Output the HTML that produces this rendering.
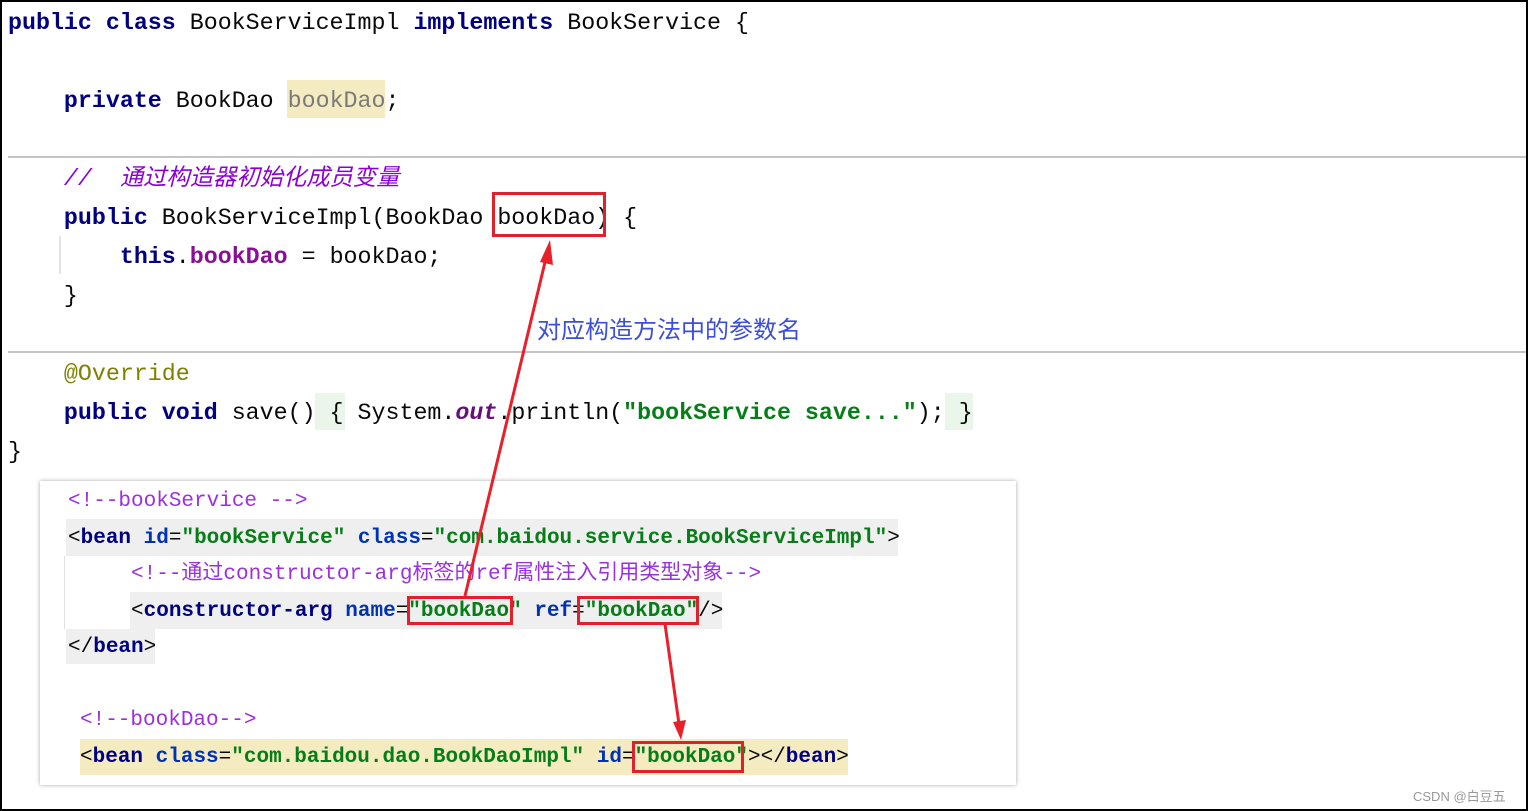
<!DOCTYPE html>
<html><head><meta charset="utf-8"><style>
html,body{margin:0;padding:0}
body{width:1528px;height:811px;position:relative;overflow:hidden;background:#fff;font-family:"Liberation Mono","Noto Sans CJK SC",monospace}
.frame{position:absolute;left:0;top:0;width:1524px;height:807px;border:2px solid #000}
.l{position:absolute;white-space:pre;font-size:23.3px;line-height:30px;color:#080808}
.x{position:absolute;white-space:pre;font-size:21px;line-height:30px;color:#080808}
.k{color:#0033b3;font-weight:bold}
.kw{color:#000080;font-weight:bold}
.s{color:#067d17;font-weight:bold}
.f{color:#871094;font-weight:bold}
.c{color:#8c00d4;font-style:italic}
.xc{color:#9b30e0}
.xt{color:#000080;font-weight:bold}
.xa{color:#0033b3;font-weight:bold}
.rect{position:absolute;border:3px solid #e0202a;box-sizing:border-box}
.hr{position:absolute;left:8px;right:2px;height:2px;background:#c4c4c4}
.bg{position:absolute}
</style></head><body>
<div class="frame"></div>
<div class="hr" style="top:156px"></div>
<div class="hr" style="top:351px"></div>
<div class="bg" style="left:287px;top:80px;width:98px;height:38px;background:#f5ebc0"></div>
<div class="bg" style="left:315px;top:393px;width:30px;height:37px;background:#eaf6ea"></div>
<div class="bg" style="left:945px;top:393px;width:28px;height:37px;background:#eaf6ea"></div>
<div class="bg" style="left:59px;top:236px;width:2px;height:38px;background:#e4e4e4"></div>

<div class="l" style="left:8px;top:8px"><span class="kw">public class</span> BookServiceImpl <span class="kw">implements</span> BookService {</div>
<div class="l" style="left:8px;top:86px">    <span class="kw">private</span> BookDao <span style="color:#7a7a7a">bookDao</span>;</div>
<div class="l" style="left:8px;top:164px">    <span class="c">//  通过构造器初始化成员变量</span></div>
<div class="l" style="left:8px;top:203px">    <span class="kw">public</span> BookServiceImpl(BookDao bookDao) {</div>
<div class="l" style="left:8px;top:242px">        <span class="kw">this</span>.<span class="f">bookDao</span> = bookDao;</div>
<div class="l" style="left:8px;top:281px">    }</div>
<div style="position:absolute;left:537px;top:315px;font-family:'Liberation Sans','Noto Sans CJK SC',sans-serif;font-size:24px;line-height:32px;color:#3d4fd6">对应构造方法中的参数名</div>
<div class="l" style="left:8px;top:359px">    <span style="color:#808000">@Override</span></div>
<div class="l" style="left:8px;top:398px">    <span class="kw">public void</span> save() { System.<span style="color:#660e7a;font-weight:bold;font-style:italic">out</span>.println(<span class="s">"bookService save..."</span>); }</div>
<div class="l" style="left:8px;top:437px">}</div>

<div class="bg" style="left:40px;top:481px;width:976px;height:304px;background:#fff;box-shadow:0 0 4px rgba(0,0,0,.35)"></div>
<div class="bg" style="left:66px;top:519px;width:832px;height:37px;background:#efefef"></div>
<div class="bg" style="left:130px;top:592px;width:592px;height:37px;background:#efefef"></div>
<div class="bg" style="left:66px;top:629px;width:89px;height:35px;background:#efefef"></div>
<div class="bg" style="left:64px;top:556px;width:1px;height:73px;background:#e0e0e0"></div>
<div class="bg" style="left:80px;top:739px;width:768px;height:36px;background:#f5ebc0"></div>

<div class="x" style="left:68px;top:487px"><span class="xc">&lt;!--bookService --&gt;</span></div>
<div class="x" style="left:68px;top:524px">&lt;<span class="xt">bean</span> <span class="xa">id</span>=<span class="s">"bookService"</span> <span class="xa">class</span>=<span class="s">"com.baidou.service.BookServiceImpl"</span>&gt;</div>
<div class="x" style="left:68px;top:560px">     <span class="xc">&lt;!--通过constructor-arg标签的ref属性注入引用类型对象--&gt;</span></div>
<div class="x" style="left:68px;top:597px">     &lt;<span class="xt">constructor-arg</span> <span class="xa">name</span>=<span class="s">"bookDao"</span> <span class="xa">ref</span>=<span class="s">"bookDao"</span>/&gt;</div>
<div class="x" style="left:68px;top:633px">&lt;/<span class="xt">bean</span>&gt;</div>
<div class="x" style="left:80px;top:706px"><span class="xc">&lt;!--bookDao--&gt;</span></div>
<div class="x" style="left:80px;top:743px">&lt;<span class="xt">bean</span> <span class="xa">class</span>=<span class="s">"com.baidou.dao.BookDaoImpl"</span> <span class="xa">id</span>=<span class="s">"bookDao"</span>&gt;&lt;/<span class="xt">bean</span>&gt;</div>

<div class="rect" style="left:492px;top:192px;width:114px;height:45px"></div>
<div class="rect" style="left:407px;top:596px;width:106px;height:29px"></div>
<div class="rect" style="left:577px;top:596px;width:122px;height:29px"></div>
<div class="rect" style="left:632px;top:741px;width:112px;height:32px"></div>

<svg style="position:absolute;left:0;top:0" width="1528" height="811">
<line x1="465" y1="596" x2="546" y2="258" stroke="#e8202a" stroke-width="3"/>
<polygon points="550,240 540,262 553,265" fill="#e8202a"/>
<line x1="665" y1="624" x2="679" y2="724" stroke="#e8202a" stroke-width="3"/>
<polygon points="681,740 673,722 686,720" fill="#e8202a"/>
</svg>
<div style="position:absolute;left:1413px;top:786px;font-family:'Liberation Sans','Noto Sans CJK SC',sans-serif;font-size:13px;color:#999">CSDN @白豆五</div>
</body></html>
